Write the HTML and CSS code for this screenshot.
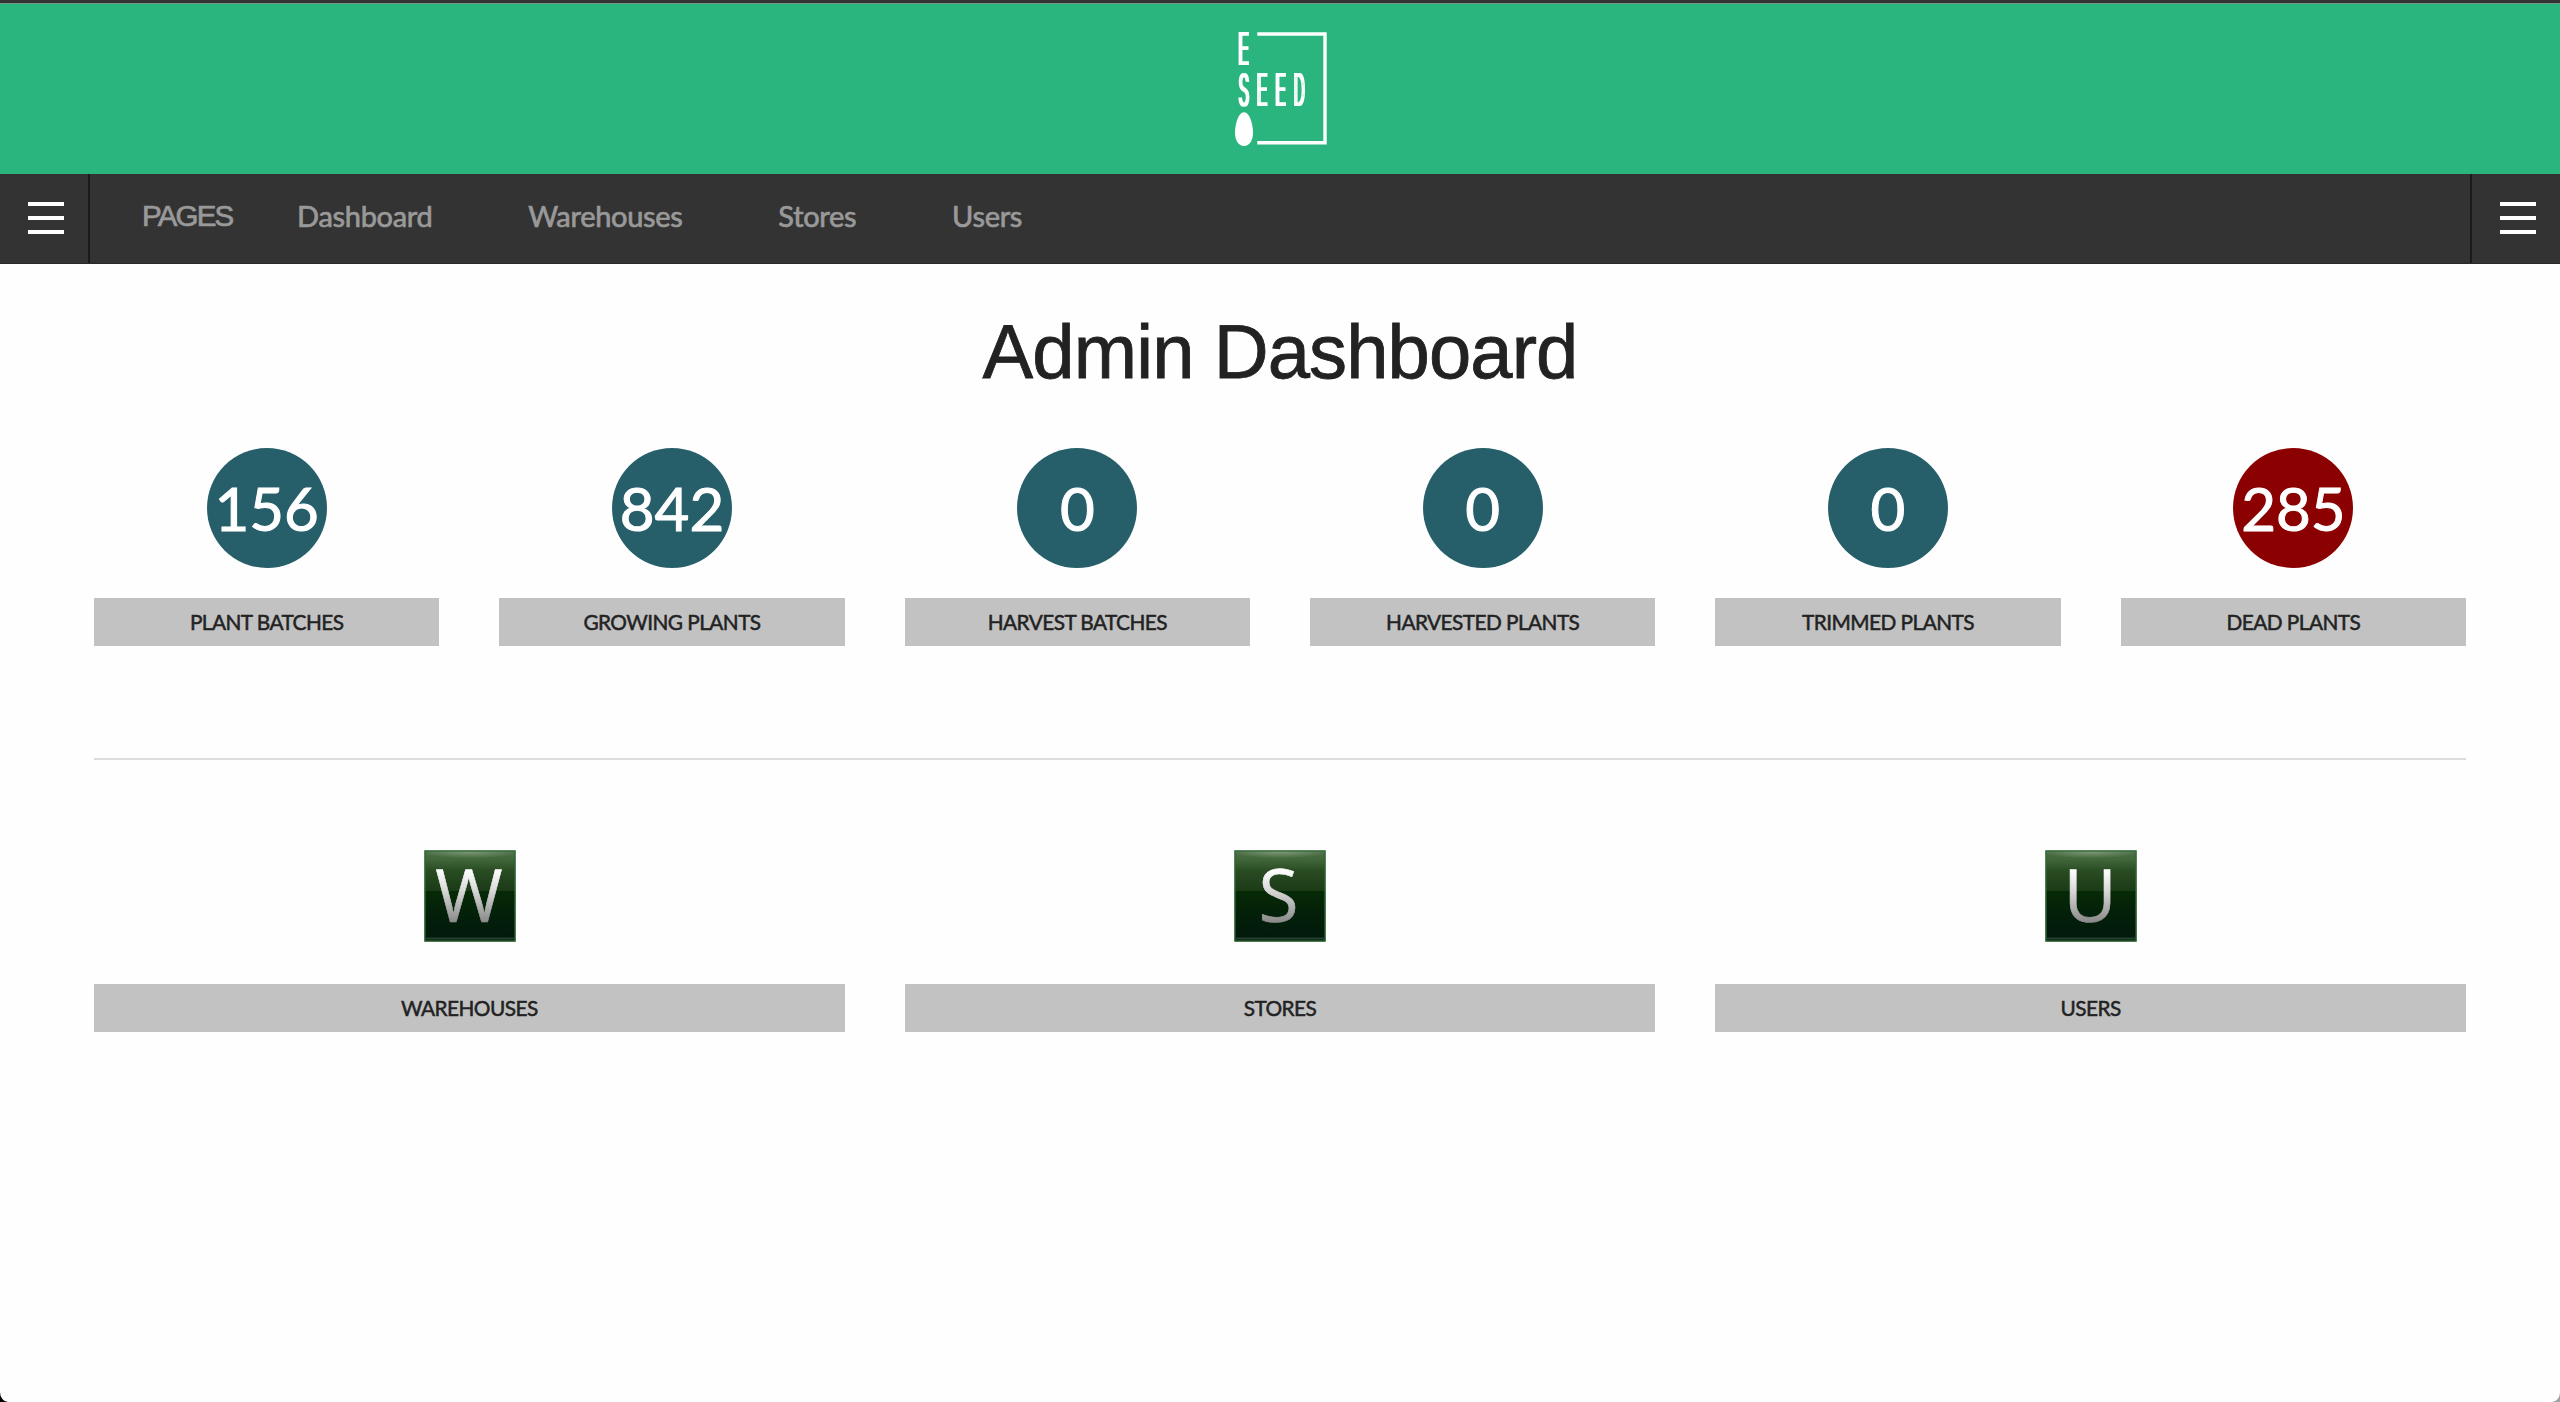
FILE: index.html
```html
<!DOCTYPE html>
<html lang="en">
<head>
<meta charset="utf-8">
<title>Admin Dashboard</title>
<link rel="stylesheet" href="styles.css">
</head>
<body>
<div class="page">
  <header class="brand">
    <svg class="logo" viewBox="0 0 92 114" role="img" aria-label="E Seed">
      <defs>
        <filter id="widen" x="-10%" y="-10%" width="120%" height="120%"><feMorphology operator="dilate" radius="1 0"/></filter>
      </defs>
      <path d="M22.3 2H90v108.7H22.3" fill="none" stroke="#fff" stroke-width="3.4"/>
      <path d="M9 80.3c6 0 9 13 9 20.500s-3.500 13.200-9 13.200-9-5.700-9-13.200 3-20.500 9-20.500z" fill="#fff"/>
      <g class="logo-text" filter="url(#widen)">
        <text transform="translate(3 32.500) scale(.42 1)">E</text>
        <text transform="translate(3.500 73.700) scale(.38 1)">S</text>
        <text transform="translate(21.500 73.700) scale(.42 1)">E</text>
        <text transform="translate(40 73.700) scale(.42 1)">E</text>
        <text transform="translate(58.700 73.700) scale(.35 1)">D</text>
      </g>
    </svg>
  </header>

  <nav class="tabbar">
    <a class="menu menu-left"><span class="bars"></span></a>
    <div class="links">
      <span class="links-title">PAGES</span>
      <a>Dashboard</a>
      <a>Warehouses</a>
      <a>Stores</a>
      <a>Users</a>
    </div>
    <a class="menu menu-right"><span class="bars"></span></a>
  </nav>

  <main class="content">
    <h1>Admin Dashboard</h1>
    <section class="stats">
      <div class="stat"><div class="circle">156</div><div class="label">PLANT BATCHES</div></div>
      <div class="stat"><div class="circle">842</div><div class="label">GROWING PLANTS</div></div>
      <div class="stat"><div class="circle">0</div><div class="label">HARVEST BATCHES</div></div>
      <div class="stat"><div class="circle">0</div><div class="label">HARVESTED PLANTS</div></div>
      <div class="stat"><div class="circle">0</div><div class="label">TRIMMED PLANTS</div></div>
      <div class="stat"><div class="circle dead">285</div><div class="label">DEAD PLANTS</div></div>
    </section>
    <hr>
    <section class="sections">
      <div class="section"><svg class="tile" viewBox="0 0 92 92"><use href="#tile-bg"/><text x="45" y="72">W</text></svg><div class="label">WAREHOUSES</div></div>
      <div class="section"><svg class="tile" viewBox="0 0 92 92"><use href="#tile-bg"/><text x="44.500" y="72">S</text></svg><div class="label">STORES</div></div>
      <div class="section"><svg class="tile" viewBox="0 0 92 92"><use href="#tile-bg"/><text x="45" y="72">U</text></svg><div class="label">USERS</div></div>
    </section>
  </main>
</div>
<svg class="defs" width="0" height="0">
  <defs>
    <linearGradient id="tile-fill" x1="0" y1="0" x2="0" y2="1">
      <stop offset="0" stop-color="#4f7048"/>
      <stop offset=".1" stop-color="#41663a"/>
      <stop offset=".22" stop-color="#2a4c23"/>
      <stop offset=".44" stop-color="#1a3b16"/>
      <stop offset=".45" stop-color="#062a06"/>
      <stop offset=".7" stop-color="#03200a"/>
      <stop offset="1" stop-color="#01180b"/>
    </linearGradient>
    <radialGradient id="tile-shine" cx=".5" cy="0" r=".55" gradientTransform="matrix(1 0 0 .15 0 0)">
      <stop offset="0" stop-color="#b9c8b6" stop-opacity=".5"/>
      <stop offset="1" stop-color="#b9c8b6" stop-opacity="0"/>
    </radialGradient>
    <linearGradient id="letter-fill" gradientUnits="userSpaceOnUse" x1="0" y1="20" x2="0" y2="72">
      <stop offset="0" stop-color="#fff"/>
      <stop offset=".4" stop-color="#d8d8d8"/>
      <stop offset="1" stop-color="#8a8a8a"/>
    </linearGradient>
    <g id="tile-bg">
      <rect x=".5" y=".5" width="91" height="91" fill="url(#tile-fill)"/>
      <rect x="1" y="1" width="90" height="90" fill="url(#tile-shine)"/>
      <rect x="1" y="1" width="90" height="90" fill="none" stroke="#2f6a34" stroke-width="1.500" opacity=".85"/>
      <path d="M2 88.500h88" stroke="#4a6a54" stroke-width="2" opacity=".5"/>
    </g>
  </defs>
</svg>
</body>
</html>
```
FILE: styles.css
```css
* { box-sizing: border-box; }
html { height: 100%; background: linear-gradient(90deg, #000 50%, #9aa5ab 50%); }
body { margin: 0; height: 100%; font-family: Lato, "Liberation Sans", sans-serif; color: #222; }
.page {
  display: flex;
  flex-direction: column;
  height: 1402px;
  overflow: hidden;
  background: #fefefe;
  border-top: 3px solid #353233;
  border-radius: 0 0 8px 8px / 0 0 10px 10px;
}
.brand {
  display: flex;
  justify-content: center;
  height: 171px;
  padding-top: 28px;
  background: #2bb57e;
  border-top: 1px solid #709785;
}
.logo { width: 92px; height: 114px; margin-left: 2px; overflow: visible; }
.logo-text { font: 400 44.500px/1 Inter, sans-serif; fill: #fff; }

.tabbar { display: flex; height: 90px; background: #333; border-bottom: 1px solid #2b292a; }
.menu { display: flex; align-items: center; width: 90px; }
.menu-left { border-right: 2px solid #1a1a1a; padding-left: 28px; }
.menu-right { border-left: 2px solid #1a1a1a; padding-left: 28px; }
.bars {
  width: 36px;
  height: 32px;
  margin-top: -1px;
  background: linear-gradient(#fff 4px, transparent 4px 14px, #fff 14px 18px, transparent 18px 28px, #fff 28px);
}
.links {
  display: flex;
  flex: 1;
  padding-left: 52px;
  font-size: 29px;
  line-height: 83px;
  letter-spacing: -.3px;
  color: #999;
  -webkit-text-stroke: .7px #999;
}
.links-title {
  width: 90px;
  margin-right: 65px;
  font-family: "Liberation Sans", Arial, sans-serif;
  font-size: 29.5px;
  letter-spacing: -1.8px;
}
.links a { margin-right: 95.8px; }

.content { padding: 0 94px; }
h1 {
  margin: 0;
  padding-top: 44px;
  height: 184px;
  text-align: center;
  font: 400 76px/88px "Liberation Sans", Arial, sans-serif;
  letter-spacing: -.9px;
  -webkit-text-stroke: .8px #222;
}
.stats { display: grid; grid-template-columns: repeat(6, 1fr); gap: 60px; }
.circle {
  display: flex;
  justify-content: center;
  align-items: center;
  width: 120px;
  height: 120px;
  margin: 0 auto 30px;
  border-radius: 50%;
  background: #265f69;
  color: #fff;
  font-size: 60px;
  -webkit-text-stroke: 1px #fff;
}
.dead { background: #8b0000; }
.label {
  height: 48px;
  background: #c2c2c2;
  text-align: center;
  font-size: 20.8px;
  line-height: 48px;
  letter-spacing: -.55px;
  -webkit-text-stroke: .5px #222;
}
hr { margin: 112px 0 0; border: 0; border-top: 2px solid #ddd; }
.sections { display: grid; grid-template-columns: repeat(3, 1fr); gap: 60px; padding-top: 90px; }
.section { display: flex; flex-direction: column; }
.tile { width: 92px; height: 92px; margin: 0 auto 42px; overflow: visible; }
.tile text {
  font: 400 73px "Open Sans", sans-serif;
  text-anchor: middle;
  fill: url(#letter-fill);
  stroke: url(#letter-fill);
  stroke-width: .6px;
}
.section:first-child .tile { transform: translateX(1px); }
.defs { position: absolute; }
```
